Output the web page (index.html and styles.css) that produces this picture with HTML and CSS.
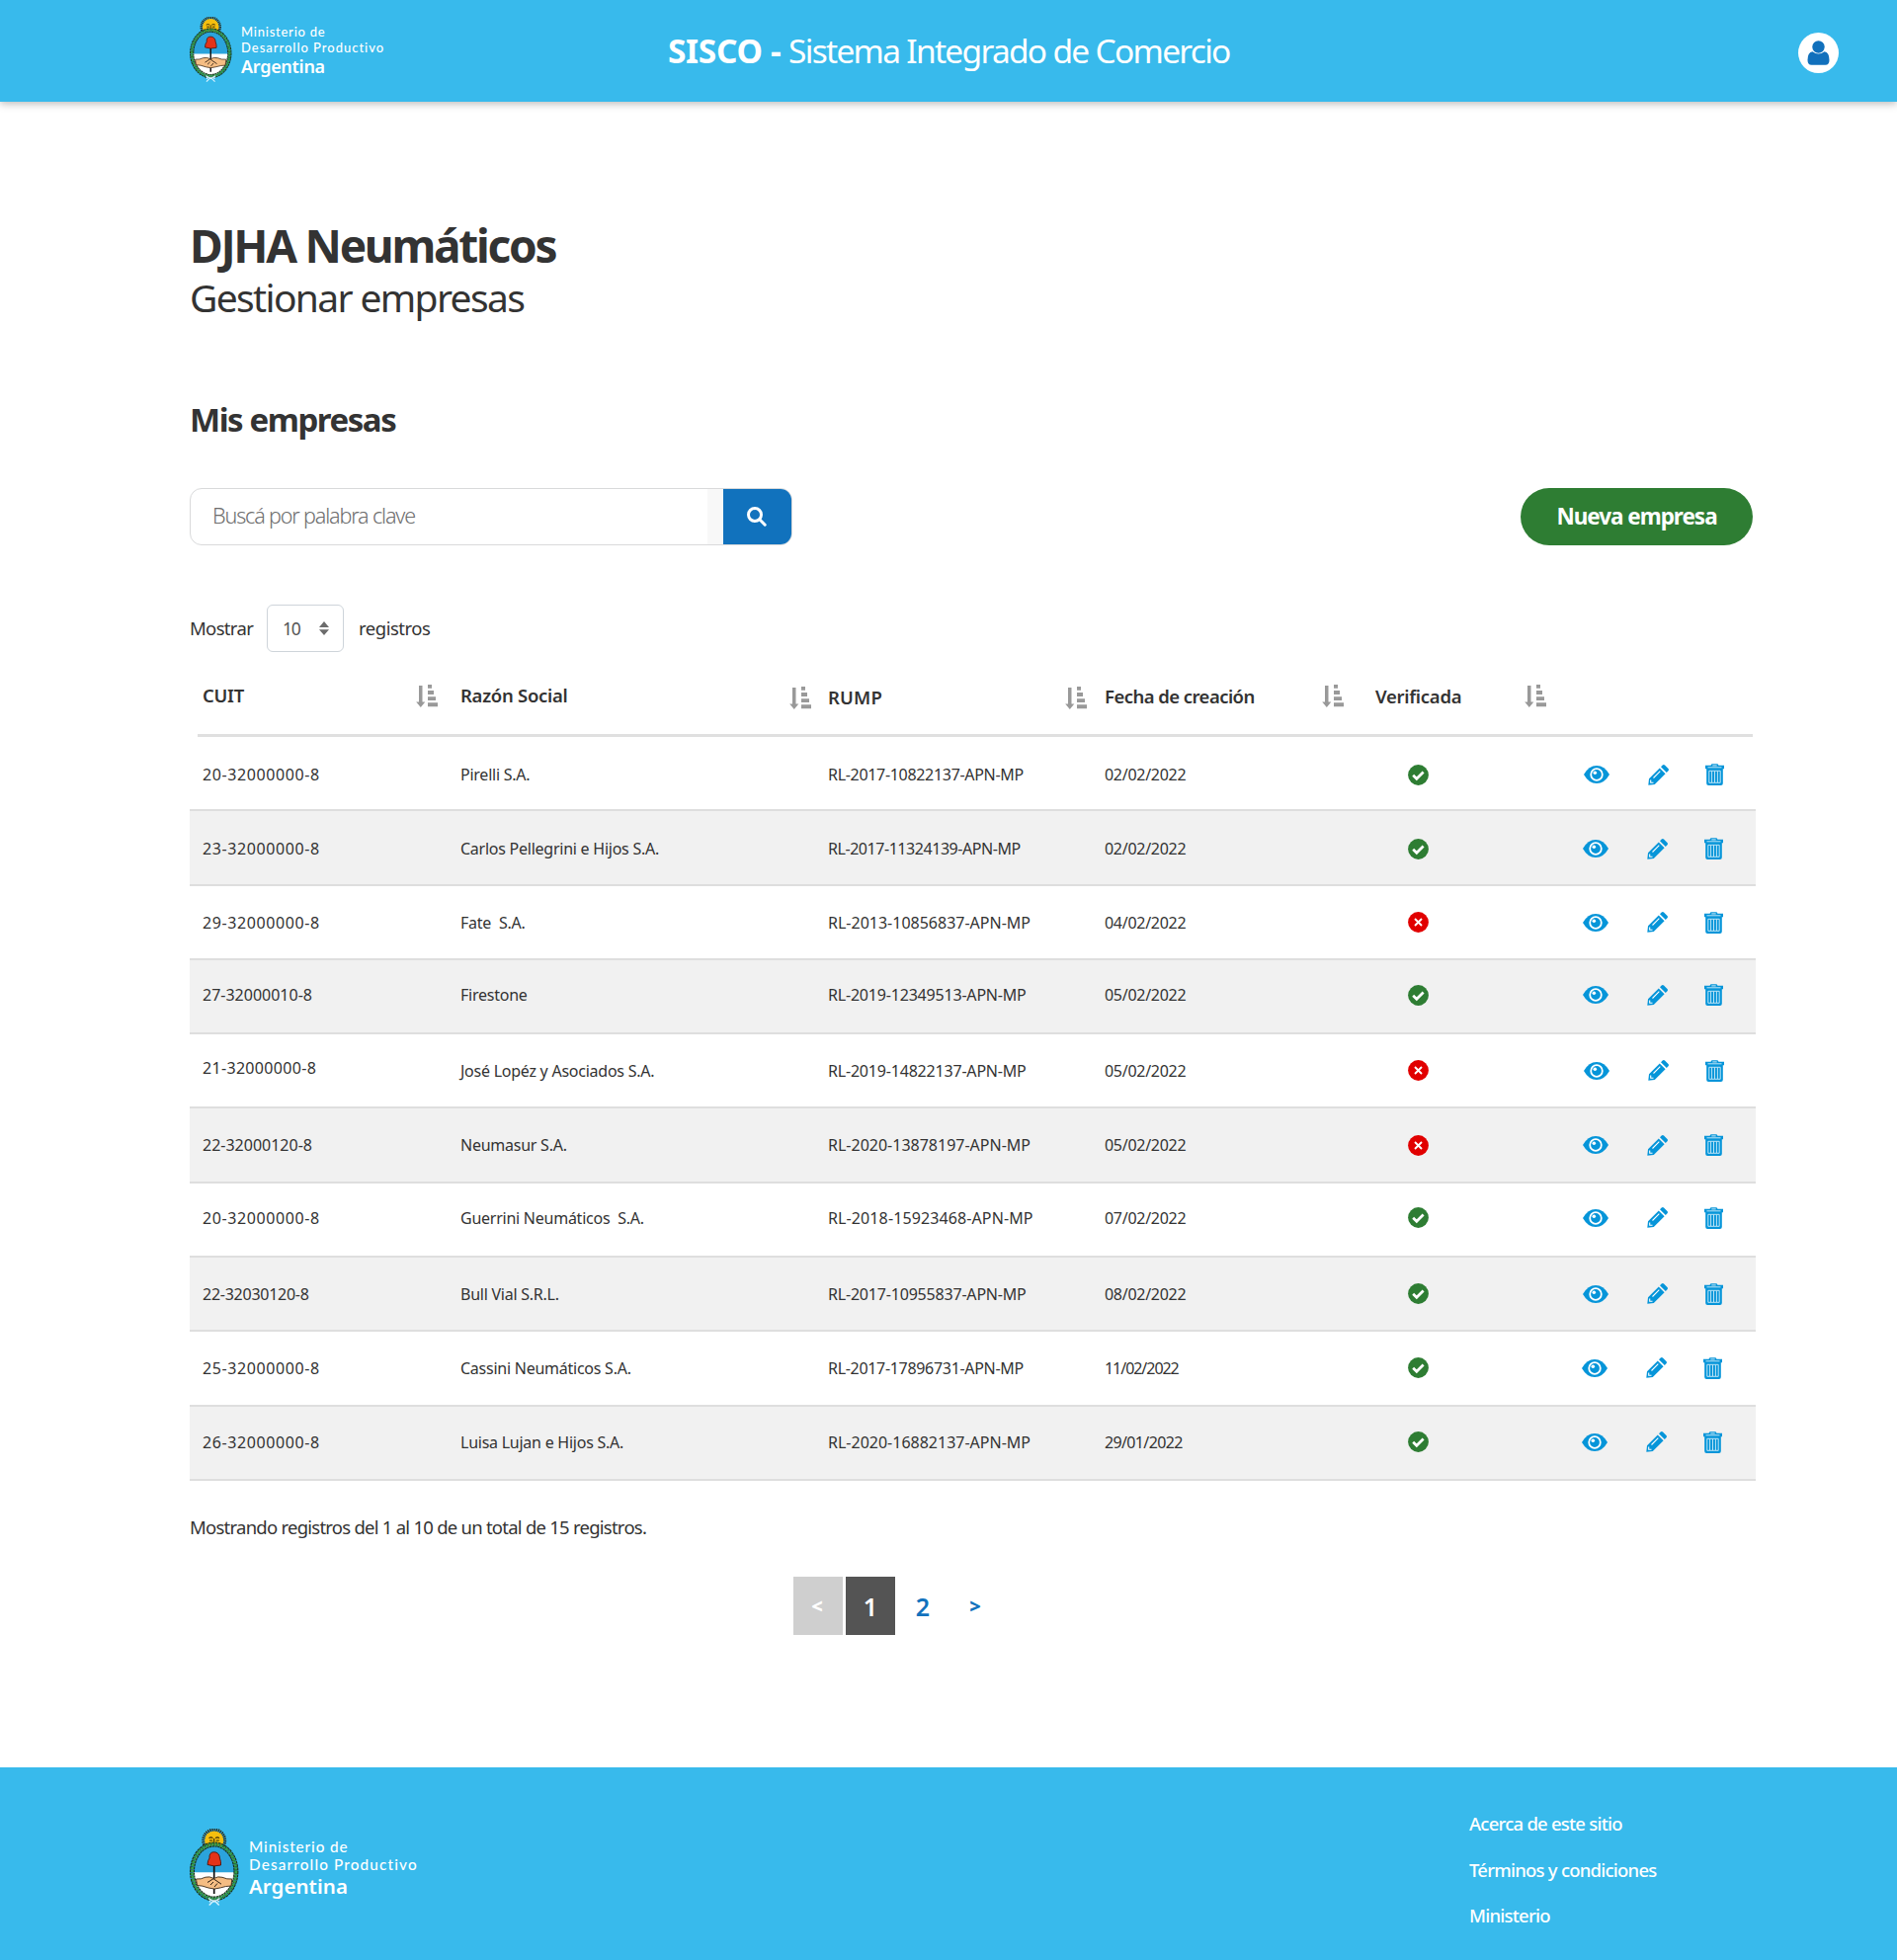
FILE: index.html
```html
<!DOCTYPE html>
<html lang="es">
<head>
<meta charset="utf-8">
<title>SISCO - Sistema Integrado de Comercio</title>
<link rel="stylesheet" href="styles.css">
</head>
<body>
<svg class="sprite" aria-hidden="true">
  <symbol id="emblem" viewBox="0 0 50 78" preserveAspectRatio="none">
    <circle cx="24.7" cy="12" r="10.8" fill="none" stroke="#2b2a1c" stroke-width="3.4" stroke-dasharray="1.3 .8"/>
    <circle cx="24.7" cy="12" r="9.6" fill="#f5bf0e"/>
    <path d="M19.5 9.600q2-1.400 4 0M26 9.600q2-1.400 4 0M20 12h3.200M26.600 12h3.200M24.700 10v3.500" stroke="#3b2c08" stroke-width="1.100" fill="none"/>
    <ellipse cx="24.700" cy="43.500" rx="21.500" ry="27" fill="#fff"/>
    <path d="M3.200 44.300a21.500 27 0 1 1 43 0z" fill="#2ba3dc"/>
    <ellipse cx="24.700" cy="43.500" rx="22.200" ry="27.500" fill="none" stroke="#17301f" stroke-width="5" stroke-dasharray="2.600 .5"/>
    <ellipse cx="24.700" cy="43.500" rx="22.200" ry="27.500" fill="none" stroke="#35a04b" stroke-width="2.900" stroke-dasharray="2.200 .9"/>
    <path d="M24.700 34v32" stroke="#111" stroke-width="1.700"/>
    <path d="M18 36.500q.2-4.500 2-6.500-.6-6 4.500-6.300 5.500.2 6 6.300 1.400 3.500 1 7-6.800 2-13.500-.5z" fill="#e4331a" stroke="#4c130c" stroke-width=".9"/>
    <path d="M6.500 51q5 .5 9.500-1.800 4-1.200 8.500 1.300 4-2.600 8.500-1.200 4.500 2.200 9.800 1.700l-.8 7q-6 .2-10.500 1.800-6.500 2.400-12.500.2Q12.500 57.500 7.500 57.500z" fill="#f5bd83" stroke="#3d2a18" stroke-width=".9"/>
    <path d="M18 54.500l6-3.800 8 5.500M21 57l3-3M25 59l3-3.500" fill="none" stroke="#2a1c10" stroke-width="1"/>
    <path d="M19 70.500l5.700 3.500 5.800-3.500M24.700 72.500l-5 5M24.700 72.500l5 5M20.500 72.500v2M29 72.500v2" fill="none" stroke="#d9f2fd" stroke-width="1.400"/>
  </symbol>
  <symbol id="sort" viewBox="0 0 22 23">
    <path d="M3 1h3.500v16.500h2.800L4.800 23 .2 17.500H3zM12 0h4v3.800h-4zM12 6h6v3.900h-6zM12 12.200h8v3.900h-8zM12 18.300h10v3.900H12z" fill="#999"/>
  </symbol>
  <symbol id="ok" viewBox="0 0 21 21">
    <circle cx="10.500" cy="10.500" r="10.400" fill="#2e7d33"/>
    <path d="M5.200 10.800l3.600 3.500 6.800-6.800" fill="none" stroke="#fff" stroke-width="2.700"/>
  </symbol>
  <symbol id="no" viewBox="0 0 21 21">
    <circle cx="10.500" cy="10.500" r="10.400" fill="#e10000"/>
    <path d="M7 7l7 7M14 7l-7 7" fill="none" stroke="#fff" stroke-width="1.900"/>
  </symbol>
  <symbol id="eye" viewBox="0 0 26 18">
    <path d="M0 9Q5 0 13 0t13 9q-5 9-13 9T0 9z" fill="#0695d9"/>
    <circle cx="13" cy="9" r="5.800" fill="none" stroke="#fff" stroke-width="1.800"/>
    <circle cx="11.300" cy="7.200" r="1.800" fill="#fff"/>
  </symbol>
  <symbol id="pencil" viewBox="0 0 21 21">
    <path d="M.3 20.700L1 14.200 11.800 3.400l5.800 5.800L6.800 20zM13 2.200L14.700.5q1.200-.9 2.300 0l3.500 3.500q.9 1.200 0 2.300L18.800 8z" fill="#0695d9"/>
    <path d="M5.500 13.500l6.800-6.800M2.700 15.500v2.800h2.800" stroke="#fff" stroke-width="1.100" fill="none"/>
  </symbol>
  <symbol id="trash" viewBox="0 0 19 22">
    <path d="M0 1.700h5.500L6.500.2h6l1 1.500H19v3.600h-1.200V20q0 2-2 2H3.200q-2 0-2-2V5.300H0z" fill="#0695d9"/>
    <path d="M2.500 3.800h14M3.800 7.300h11.400v12H3.800zM6.600 7.500v11.500M9.500 7.500v11.500M12.400 7.500v11.500" fill="none" stroke="#d3edf9" stroke-width=".9"/>
    <path d="M7.300 1.900h4.400" stroke="#fff" stroke-width=".8"/>
  </symbol>
</svg>

<header class="topbar">
  <a class="brand">
    <svg class="brand-emblem"><use href="#emblem"/></svg>
    <span class="brand-text">
      <span class="brand-line">Ministerio de</span>
      <span class="brand-line brand-wide">Desarrollo Productivo</span>
      <strong class="brand-country">Argentina</strong>
    </span>
  </a>
  <p class="app-name"><strong class="app-short">SISCO -</strong> <span class="app-long">Sistema Integrado de Comercio</span></p>
  <a class="user" aria-label="Usuario">
    <svg class="user-icon" viewBox="0 0 23 25"><circle cx="11.500" cy="6.500" r="6.200"/><path d="M5.500 11.300q6 4.600 12 0 5 .8 5 8.500 0 5-4 5h-14q-4 0-4-5 0-7.700 5-8.500z"/></svg>
  </a>
</header>

<main class="content">
  <h1 class="title">DJHA Neumáticos</h1>
  <p class="subtitle">Gestionar empresas</p>
  <h2 class="section">Mis empresas</h2>

  <div class="toolbar">
    <form class="search">
      <span class="search-input">Buscá por palabra clave</span>
      <span class="search-strip"></span>
      <span class="search-button"><svg class="search-icon" viewBox="0 0 20 20"><circle cx="8" cy="8" r="6.500"/><path d="M12.800 12.800l5.400 5.400"/></svg></span>
    </form>
    <a class="new-button">Nueva empresa</a>
  </div>

  <div class="length">
    <span class="length-label">Mostrar</span>
    <span class="length-select">10<svg class="caret" viewBox="0 0 10 14"><path d="M5 0l5 6H0zM0 8.200h10l-5 5.800z"/></svg></span>
    <span class="length-unit">registros</span>
  </div>

  <div class="table" role="table">
    <div class="head" role="row">
      <div class="th th-cuit">CUIT<svg class="sort"><use href="#sort"/></svg></div>
      <div class="th th-name">Razón Social<svg class="sort"><use href="#sort"/></svg></div>
      <div class="th th-rump">RUMP<svg class="sort"><use href="#sort"/></svg></div>
      <div class="th th-date">Fecha de creación<svg class="sort"><use href="#sort"/></svg></div>
      <div class="th th-check">Verificada<svg class="sort"><use href="#sort"/></svg></div>
    </div>
    <div class="row"><span class="cuit">20-32000000-8</span><span class="name">Pirelli S.A.</span><span class="rump tight">RL-2017-10822137-APN-MP</span><span class="date">02/02/2022</span><span class="check"><svg><use href="#ok"/></svg></span><span class="actions"><svg class="eye"><use href="#eye"/></svg><svg class="pencil"><use href="#pencil"/></svg><svg class="trash"><use href="#trash"/></svg></span></div>
    <div class="row nudge"><span class="cuit">23-32000000-8</span><span class="name">Carlos Pellegrini e Hijos S.A.</span><span class="rump tighter">RL-2017-11324139-APN-MP</span><span class="date">02/02/2022</span><span class="check"><svg><use href="#ok"/></svg></span><span class="actions"><svg class="eye"><use href="#eye"/></svg><svg class="pencil"><use href="#pencil"/></svg><svg class="trash"><use href="#trash"/></svg></span></div>
    <div class="row nudge up-half"><span class="cuit">29-32000000-8</span><span class="name">Fate&nbsp; S.A.</span><span class="rump">RL-2013-10856837-APN-MP</span><span class="date">04/02/2022</span><span class="check"><svg><use href="#no"/></svg></span><span class="actions"><svg class="eye"><use href="#eye"/></svg><svg class="pencil"><use href="#pencil"/></svg><svg class="trash"><use href="#trash"/></svg></span></div>
    <div class="row nudge up-3"><span class="cuit narrow">27-32000010-8</span><span class="name">Firestone</span><span class="rump snug">RL-2019-12349513-APN-MP</span><span class="date">05/02/2022</span><span class="check"><svg><use href="#ok"/></svg></span><span class="actions"><svg class="eye"><use href="#eye"/></svg><svg class="pencil"><use href="#pencil"/></svg><svg class="trash"><use href="#trash"/></svg></span></div>
    <div class="row up-1"><span class="cuit cuit-high">21-32000000-8</span><span class="name">José Lopéz y Asociados S.A.</span><span class="rump snug">RL-2019-14822137-APN-MP</span><span class="date">05/02/2022</span><span class="check"><svg><use href="#no"/></svg></span><span class="actions"><svg class="eye"><use href="#eye"/></svg><svg class="pencil"><use href="#pencil"/></svg><svg class="trash"><use href="#trash"/></svg></span></div>
    <div class="row nudge up-1"><span class="cuit narrow">22-32000120-8</span><span class="name">Neumasur S.A.</span><span class="rump">RL-2020-13878197-APN-MP</span><span class="date">05/02/2022</span><span class="check"><svg><use href="#no"/></svg></span><span class="actions"><svg class="eye"><use href="#eye"/></svg><svg class="pencil"><use href="#pencil"/></svg><svg class="trash"><use href="#trash"/></svg></span></div>
    <div class="row nudge up-3"><span class="cuit">20-32000000-8</span><span class="name">Guerrini Neumáticos&nbsp; S.A.</span><span class="rump wide">RL-2018-15923468-APN-MP</span><span class="date">07/02/2022</span><span class="check"><svg><use href="#ok"/></svg></span><span class="actions"><svg class="eye"><use href="#eye"/></svg><svg class="pencil"><use href="#pencil"/></svg><svg class="trash"><use href="#trash"/></svg></span></div>
    <div class="row nudge up-1"><span class="cuit narrowest">22-32030120-8</span><span class="name">Bull Vial S.R.L.</span><span class="rump snug">RL-2017-10955837-APN-MP</span><span class="date">08/02/2022</span><span class="check"><svg><use href="#ok"/></svg></span><span class="actions"><svg class="eye"><use href="#eye"/></svg><svg class="pencil"><use href="#pencil"/></svg><svg class="trash"><use href="#trash"/></svg></span></div>
    <div class="row nudge-2 up-2"><span class="cuit">25-32000000-8</span><span class="name">Cassini Neumáticos S.A.</span><span class="rump tight">RL-2017-17896731-APN-MP</span><span class="date date-tight">11/02/2022</span><span class="check"><svg><use href="#ok"/></svg></span><span class="actions"><svg class="eye"><use href="#eye"/></svg><svg class="pencil"><use href="#pencil"/></svg><svg class="trash"><use href="#trash"/></svg></span></div>
    <div class="row nudge-2 up-2"><span class="cuit">26-32000000-8</span><span class="name">Luisa Lujan e Hijos S.A.</span><span class="rump">RL-2020-16882137-APN-MP</span><span class="date date-snug">29/01/2022</span><span class="check"><svg><use href="#ok"/></svg></span><span class="actions"><svg class="eye"><use href="#eye"/></svg><svg class="pencil"><use href="#pencil"/></svg><svg class="trash"><use href="#trash"/></svg></span></div>
  </div>

  <p class="summary">Mostrando registros del 1 al 10 de un total de 15 registros.</p>

  <nav class="pages">
    <a class="page page-prev">&lt;</a><a class="page page-current">1</a><a class="page">2</a><a class="page page-next">&gt;</a>
  </nav>
</main>

<footer class="footer">
  <a class="brand brand-large">
    <svg class="brand-emblem"><use href="#emblem"/></svg>
    <span class="brand-text">
      <span class="brand-line">Ministerio de</span>
      <span class="brand-line brand-wide">Desarrollo Productivo</span>
      <strong class="brand-country">Argentina</strong>
    </span>
  </a>
  <nav class="links"><a>Acerca de este sitio</a><a>Términos y condiciones</a><a>Ministerio</a></nav>
</footer>
</body>
</html>
```

FILE: styles.css
```css
* { box-sizing: border-box; }

body {
  margin: 0;
  min-height: 1984px;
  display: flex;
  flex-direction: column;
  background: #fff;
  color: #333;
  font-family: "Noto Sans", "Open Sans", sans-serif;
  font-size: 18.5px;
  white-space: nowrap;
}

p, h1, h2 { margin: 0; }
svg { display: block; flex: none; }
.sprite { position: absolute; width: 0; height: 0; }

/* Top bar */
.topbar {
  height: 103px;
  padding: 0 59px 0 192px;
  display: grid;
  grid-template-columns: 484px 1fr auto;
  background: #38baec;
  color: #fff;
  box-shadow: 0 2px 8px rgba(0, 0, 0, .28);
}

.brand { display: flex; align-items: flex-start; gap: 9px; padding-top: 17px; }
.brand-emblem { width: 43px; height: 66px; }
.brand-text { display: flex; flex-direction: column; padding-top: 8px; font-family: Lato, "Noto Sans", sans-serif; }
.brand-line { font-size: 13px; line-height: 15.5px; font-weight: 500; letter-spacing: .058em; }
.brand-wide { letter-spacing: .075em; }
.brand-country { font: 600 18px/22px "Noto Sans", sans-serif; letter-spacing: -.016em; }

.app-name { font-size: 33.5px; line-height: 40px; padding-top: 31px; }
.app-short { margin-right: -1px; font-weight: 700; letter-spacing: -.01em; }
.app-long { letter-spacing: -.051em; }

.user {
  width: 41px;
  height: 41px;
  margin-top: 33px;
  display: grid;
  place-items: center;
  border-radius: 50%;
  background: #fff;
}
.user-icon { width: 23px; height: 25px; fill: #1170bc; }

/* Page heading */
.content { flex: 1; padding: 117px 143px 0 192px; }
.title { font-size: 46px; line-height: 56px; font-weight: 700; letter-spacing: -.0493em; }
.subtitle { margin-top: 1px; font-size: 39px; line-height: 48px; letter-spacing: -.0425em; }
.section { margin-top: 80px; font-size: 33px; line-height: 40px; font-weight: 700; letter-spacing: -.0435em; }

/* Search and main action */
.toolbar { display: flex; justify-content: space-between; margin: 49px 3px 0 0; }
.search {
  width: 610px;
  height: 58px;
  display: flex;
  border: 1px solid #d9dadb;
  border-radius: 12px;
  overflow: hidden;
}
.search-input { flex: 1; padding-left: 22px; color: #6d6d6d; font-size: 21.5px; line-height: 53px; font-weight: 300; letter-spacing: -.0529em; }
.search-strip { width: 16px; background: #f8f8f8; }
.search-button { width: 69px; padding-right: 2px; display: grid; place-items: center; background: #1172bd; }
.search-icon { width: 20px; height: 20px; fill: none; stroke: #fff; stroke-width: 3; stroke-linecap: round; }
.new-button {
  width: 235px;
  height: 58px;
  text-align: center;
  border-radius: 29px;
  background: #2e7d33;
  color: #fff;
  font-size: 22.5px;
  line-height: 58px;
  font-weight: 700;
  letter-spacing: -.0453em;
}

/* Rows per page */
.length { display: flex; align-items: center; margin-top: 60px; }
.length-label { width: 78px; padding-bottom: 2px; letter-spacing: -.0357em; }
.length-unit { padding-bottom: 2px; letter-spacing: -.0262em; }
.length-select {
  width: 78px;
  height: 48px;
  margin-right: 15px;
  padding: 0 14px 1px 15px;
  display: flex;
  align-items: center;
  justify-content: space-between;
  border: 1px solid #ced4da;
  border-radius: 6px;
  color: #555;
  font-size: 17.5px;
  letter-spacing: -.07em;
}
.caret { width: 10px; height: 14px; fill: #6c6c6c; margin-top: 1px; }

/* Companies table */
.head, .row { display: grid; grid-template-columns: 274px 372px 280px 274px 211px 174px; }
.head {
  height: 86px;
  margin: 0 3px 0 8px;
  grid-template-columns: 266px 372px 280px 274px 211px 171px;
  border-bottom: 3px solid #e0e0e0;
}
.th { display: flex; align-items: center; justify-content: space-between; font-weight: 600; letter-spacing: -.015em; }
.th-cuit { padding: 3px 23px 0 5px; }
.th-name { padding: 3px 17px 0 0; }
.th-name .sort { margin-top: 7px; }
.th-rump { padding: 7px 18px 0 0; letter-spacing: .01em; }
.th-rump .sort { margin-bottom: 1px; }
.th-date { padding: 5px 32px 0 0; letter-spacing: -.0297em; }
.th-date .sort, .th-check .sort { margin-top: 1px; }
.th-check { padding: 5px 38px 0 0; }
.sort { width: 22px; height: 23px; margin-top: 3px; }

.row {
  height: 75.3px;
  padding-top: 3px;
  align-items: center;
  border-bottom: 2px solid #dedede;
  font-size: 16px;
}
.row:nth-child(odd) { background: #f1f1f1; }
.up-half { padding-top: 1px; }
.up-1 { padding-top: 0; }
.up-2 { padding: 0 0 1px; }
.up-3 { padding: 0 0 3px; }
.cuit { padding-left: 13px; letter-spacing: .038em; }
.cuit-high { padding-bottom: 5px; letter-spacing: .02em; }
.narrow { letter-spacing: 0; }
.narrowest { letter-spacing: -.016em; }
.name { letter-spacing: -.0155em; }
.snug { letter-spacing: -.012em; }
.tight { letter-spacing: -.0195em; }
.tighter { letter-spacing: -.028em; }
.wide { letter-spacing: .007em; }
.date { letter-spacing: -.0175em; }
.date-snug { letter-spacing: -.04em; }
.date-tight { letter-spacing: -.065em; }
.check { padding-left: 33px; }
.check svg { width: 21px; height: 21px; }
.actions { display: flex; align-items: center; }
.nudge .actions { margin-left: -1px; }
.nudge-2 .actions { margin-left: -2px; }
.eye { width: 26px; height: 18px; }
.pencil { width: 21px; height: 21px; margin: 0 37px 0 39px; }
.trash { width: 19px; height: 22px; }

.summary { margin-top: 34px; line-height: 26px; letter-spacing: -.0407em; }

/* Pagination */
.pages { display: flex; gap: 3px; margin: 37px 0 0 611px; }
.page { width: 50px; height: 59px; text-align: center; color: #1172bd; font-size: 25px; line-height: 61px; font-weight: 600; }
.page-prev { background: #cfcfcf; color: #fff; }
.page-current { background: #545454; color: #fff; }
.page-prev, .page-next { font-size: 20px; line-height: 59px; font-weight: 800; }
.page-prev { padding-right: 2px; }

/* Footer */
.footer {
  height: 195px;
  padding: 0 245px 0 192px;
  display: flex;
  justify-content: space-between;
  background: #38baec;
  color: #fff;
}
.brand-large { padding-top: 62px; gap: 10px; }
.brand-large .brand-emblem { width: 50px; height: 78px; }
.brand-large .brand-text { padding-top: 9px; }
.brand-large .brand-line { font-size: 15.3px; line-height: 18px; }
.brand-large .brand-country { font-size: 20.5px; line-height: 27px; letter-spacing: .002em; }
.links { width: 188px; padding-top: 34px; font-weight: 500; line-height: 46.5px; display: flex; flex-direction: column; letter-spacing: -.0415em; }
```
